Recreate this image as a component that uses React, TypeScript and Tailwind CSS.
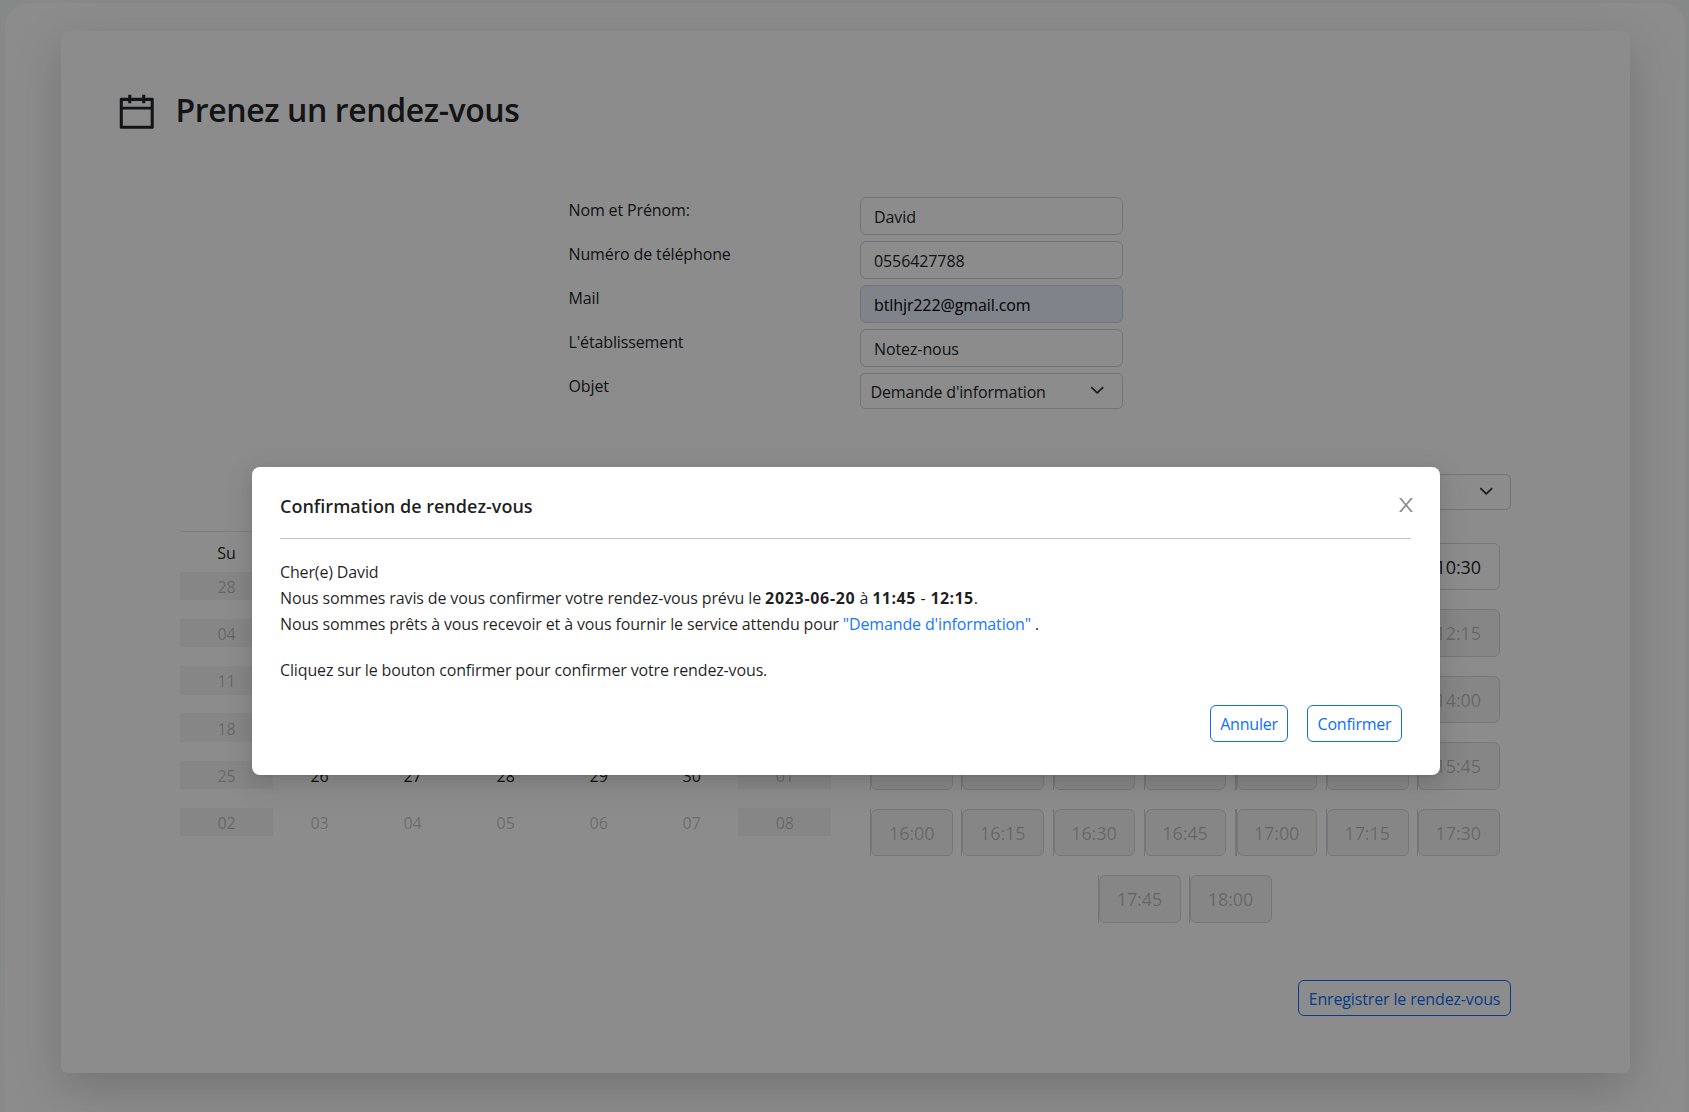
import React from "react";
import { AiOutlineCalendar } from "react-icons/ai";

const weekdays = ["Su", "Mo", "Tu", "We", "Th", "Fr", "Sa"];
const weeks = [
  ["28", "29", "30", "31", "01", "02", "03"],
  ["04", "05", "06", "07", "08", "09", "10"],
  ["11", "12", "13", "14", "15", "16", "17"],
  ["18", "19", "20", "21", "22", "23", "24"],
  ["25", "26", "27", "28", "29", "30", "01"],
  ["02", "03", "04", "05", "06", "07", "08"],
];

const slotRows = [
  ["09:00", "09:15", "09:30", "09:45", "10:00", "10:15", "10:30"],
  ["10:45", "11:00", "11:15", "11:30", "11:45", "12:00", "12:15"],
  ["12:30", "12:45", "13:00", "13:15", "13:30", "13:45", "14:00"],
  ["14:15", "14:30", "14:45", "15:00", "15:15", "15:30", "15:45"],
  ["16:00", "16:15", "16:30", "16:45", "17:00", "17:15", "17:30"],
  ["17:45", "18:00"],
];

const fields = [
  { label: "Nom et Prénom:", value: "David", filled: false },
  { label: "Numéro de téléphone", value: "0556427788", filled: false },
  { label: "Mail", value: "btlhjr222@gmail.com", filled: true },
  { label: "L'établissement", value: "Notez-nous", filled: false },
];

function Chevron() {
  return (
    <svg width="14.5" height="14.5" viewBox="0 0 16 16" fill="none" stroke="#343a40" strokeWidth="2" strokeLinecap="round" strokeLinejoin="round">
      <path d="m2 5 6 6 6-6" />
    </svg>
  );
}

function Select({ value, className = "" }: { value: string; className?: string }) {
  return (
    <div className={`flex h-9 items-center justify-between rounded-[5px] border border-[#ced4da] bg-white pl-[9.5px] ${className}`}>
      <span className="pt-[2px] tracking-[-0.16px]">{value}</span>
      <Chevron />
    </div>
  );
}

function Header() {
  return (
    <header className="flex items-center pl-[54px] pt-[59px]">
      <AiOutlineCalendar className="size-[43.5px] text-[#212529]" />
      <h1 className="ml-[17px] pb-[3px] text-[32px] leading-[38px] font-semibold tracking-[-0.4px]">Prenez un rendez-vous</h1>
    </header>
  );
}

function Form() {
  return (
    <div className="mt-[63px] ml-[507px] flex w-[555px] flex-col gap-[6px]">
      {fields.map((f) => (
        <div key={f.label} className="flex h-[38px] justify-between">
          <label className="pt-[1px] pl-[0.5px] leading-6">{f.label}</label>
          <div className={`flex w-[263px] items-center rounded-md border border-[#ced4da] pt-[2px] pl-[13px] tracking-[-0.1px] ${f.filled ? "bg-[#e8f0fe] text-black" : "bg-white"}`}>
            {f.value}
          </div>
        </div>
      ))}
      <div className="flex justify-between">
        <label className="pt-[1px] pl-[0.5px] leading-6">Objet</label>
        <Select value="Demande d'information" className="w-[263px] pr-[17.5px]" />
      </div>
    </div>
  );
}

function Calendar() {
  return (
    <div className="w-[652px] pt-[57px] text-center text-black/90 tracking-normal">
      <div className="grid h-[41px] grid-cols-[repeat(7,93.05px)] border-t border-black/10">
        {weekdays.map((d) => (
          <div key={d} className="pt-[9px] leading-6">{d}</div>
        ))}
      </div>
      {weeks.map((week, r) => (
        <div key={r} className="grid h-[47.25px] grid-cols-[repeat(7,93.05px)]">
          {week.map((day, c) => {
            const outside = (r === 0 && c < 4) || (r === 4 && c === 6) || r === 5;
            const closed = c === 0 || c === 6;
            return (
              <div key={c} className={`h-[28.7px] pt-[1.4px] leading-7 ${closed ? "bg-black/4" : ""} ${outside || closed ? "text-black/25" : ""}`}>
                {day}
              </div>
            );
          })}
        </div>
      ))}
    </div>
  );
}

function Slots() {
  return (
    <div className="h-[449px] w-[652px]">
      <div className="flex justify-end">
        <Select value="Durée" className="w-[263px] pr-[16.5px]" />
      </div>
      <div className="mt-[33.3px] flex flex-col gap-[19.2px]">
        {slotRows.map((row, r) => (
          <div key={r} className="flex justify-center gap-[8.3px]">
            {row.map((time, c) => (
              <div key={time} className={`h-[47.3px] w-[82.8px] border-[#ced4da] ${c === 4 ? "border-l-2" : "border-l"}`}>
                <button
                  className={`h-full w-full rounded-md border border-[#d9d9d9] px-0 pt-[2px] text-center text-[18px] tracking-[-0.1px] ${r === 0 ? "bg-white text-black/90" : "bg-[#f5f5f5] text-black/25"}`}
                >
                  <span className="pr-[1px]">{time}</span>
                </button>
              </div>
            ))}
          </div>
        ))}
      </div>
    </div>
  );
}

function OutlineButton({ children, className }: { children: React.ReactNode; className: string }) {
  return (
    <button className={`rounded-md border border-[#0d6efd] text-[#0d6efd] ${className}`}>{children}</button>
  );
}

function ConfirmDialog() {
  return (
    <div className="absolute inset-0 bg-black/45">
      <div
        role="dialog"
        className="mt-[467px] ml-[252px] flex h-[308px] w-[1188px] flex-col rounded-lg bg-white pr-[29px] pl-7 text-black/88 shadow-[0_3px_6px_-4px_rgba(0,0,0,0.12),0_6px_16px_rgba(0,0,0,0.08),0_9px_28px_8px_rgba(0,0,0,0.06)]"
      >
        <div className="flex h-[72px] shrink-0 items-center justify-between border-b border-[#c5c5c5] pt-[6px]">
          <h2 className="pt-[2px] text-[18px] font-semibold tracking-normal">Confirmation de rendez-vous</h2>
          <svg className="-mr-[6px] mb-[1px] size-[22px]" viewBox="0 0 1024 1024" fill="#8c8c8c">
            <path d="M563.8 512l262.5-312.9c4.4-5.2.7-13.1-6.1-13.1h-79.8c-4.7 0-9.2 2.1-12.3 5.7L511.6 449.8 295.1 191.7c-3-3.6-7.5-5.7-12.3-5.7H203c-6.8 0-10.5 7.9-6.1 13.1L459.4 512 196.9 824.9A7.95 7.95 0 0 0 203 838h79.8c4.7 0 9.2-2.1 12.3-5.7l216.5-258.1 216.5 258.1c3 3.6 7.5 5.7 12.3 5.7h79.8c6.8 0 10.5-7.9 6.1-13.1L563.8 512z" />
          </svg>
        </div>
        <div className="pt-5 leading-[26px] tracking-[-0.14px]">
          <p>Cher(e) David</p>
          <p>
            <span className="tracking-[-0.13px]">Nous sommes ravis de vous confirmer votre rendez-vous prévu le </span>
            <b className="tracking-[0.68px]">2023-06-20</b> à <b className="tracking-[0.5px]">11:45</b>
            <span className="tracking-[0.4px]"> - </span>
            <b className="tracking-[0.4px]">12:15</b>.
          </p>
          <p>
            Nous sommes prêts à vous recevoir et à vous fournir le service attendu pour{" "}
            <span className="text-[#1677ff]">"Demande d'information"</span> .
          </p>
          <p className="mt-5">Cliquez sur le bouton confirmer pour confirmer votre rendez-vous.</p>
        </div>
        <div className="mt-[22px] mr-[9px] flex justify-end gap-[19px]">
          <OutlineButton className="h-[37px] w-[78px] pt-[1px] tracking-[-0.22px]">Annuler</OutlineButton>
          <OutlineButton className="h-[37px] w-[95px] pt-[1px] tracking-[-0.22px]">Confirmer</OutlineButton>
        </div>
      </div>
    </div>
  );
}

export default function App() {
  return (
    <div className="relative h-[1112px] w-[1689px] overflow-hidden bg-linear-to-b from-[#f2faf6] to-[#f7f9f8] pt-[3px] pl-[5px] font-['Open_Sans','Noto_Sans',sans-serif] text-[16px] tracking-[-0.13px] text-[#212529]">
      <div className="h-[1140px] w-[1680px] rounded-[24px] bg-white pt-[28px] pl-[56px]">
        <main className="flex h-[1042px] w-[1569px] flex-col rounded-md bg-white shadow-[0_16px_48px_rgba(0,0,0,0.175)]">
          <Header />
          <Form />
          <div className="mt-[65px] flex items-start gap-[27px] pl-[119px]">
            <Calendar />
            <Slots />
          </div>
          <div className="flex justify-end pt-[57px] pr-[119px]">
            <OutlineButton className="h-9 w-[213px] pt-[2px] tracking-[-0.15px]">Enregistrer le rendez-vous</OutlineButton>
          </div>
        </main>
      </div>
      <ConfirmDialog />
    </div>
  );
}
